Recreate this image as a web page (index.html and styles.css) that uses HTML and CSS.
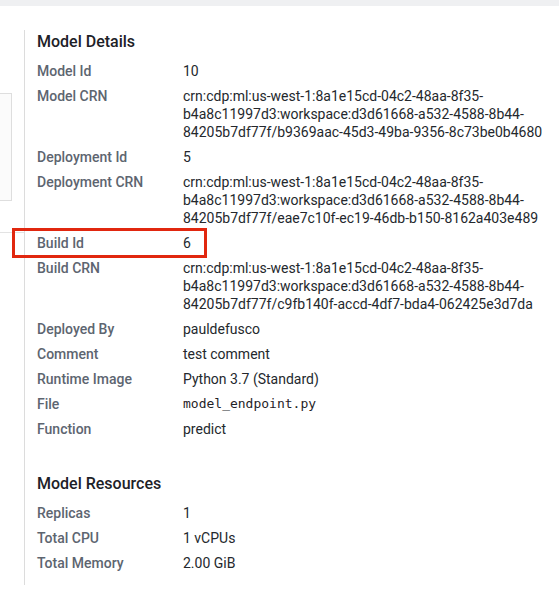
FILE: index.html
```html
<!DOCTYPE html>
<html>
<head>
<meta charset="utf-8">
<link rel="stylesheet" href="styles.css">
</head>
<body>
<div class="topbar"></div>
<div class="layout">
  <aside class="side">
    <div class="side-box"></div>
    <div class="side-rule"></div>
  </aside>
  <section class="panel">
    <h2 class="heading">Model Details</h2>
    <dl class="details">
      <dt>Model Id</dt><dd>10</dd>
      <dt>Model CRN</dt><dd>crn:cdp:ml:us-west-1:8a1e15cd-04c2-48aa-8f35-b4a8c11997d3:workspace:d3d61668-a532-4588-8b44-84205b7df77f/b9369aac-45d3-49ba-9356-8c73be0b4680</dd>
      <dt>Deployment Id</dt><dd>5</dd>
      <dt>Deployment CRN</dt><dd>crn:cdp:ml:us-west-1:8a1e15cd-04c2-48aa-8f35-b4a8c11997d3:workspace:d3d61668-a532-4588-8b44-84205b7df77f/eae7c10f-ec19-46db-b150-8162a403e489</dd>
      <div class="highlight"><dt>Build Id</dt><dd>6</dd></div>
      <dt>Build CRN</dt><dd>crn:cdp:ml:us-west-1:8a1e15cd-04c2-48aa-8f35-b4a8c11997d3:workspace:d3d61668-a532-4588-8b44-84205b7df77f/c9fb140f-accd-4df7-bda4-062425e3d7da</dd>
      <dt>Deployed By</dt><dd>pauldefusco</dd>
      <dt>Comment</dt><dd>test comment</dd>
      <dt>Runtime Image</dt><dd>Python 3.7 (Standard)</dd>
      <dt>File</dt><dd class="mono">model_endpoint.py</dd>
      <dt>Function</dt><dd>predict</dd>
    </dl>
    <h2 class="heading heading-2">Model Resources</h2>
    <dl class="details">
      <dt>Replicas</dt><dd>1</dd>
      <dt>Total CPU</dt><dd>1 vCPUs</dd>
      <dt>Total Memory</dt><dd>2.00 GiB</dd>
    </dl>
  </section>
</div>
</body>
</html>
```

FILE: styles.css
```css
html, body {
  margin: 0;
  padding: 0;
  background: #ffffff;
  font-family: Roboto, "Liberation Sans", sans-serif;
}
.topbar {
  height: 6px;
  background: #eff0f2;
}
.layout {
  display: flex;
  padding-top: 24px;
}
.side {
  width: 24px;
  flex: none;
}
.side-box {
  margin-top: 63px;
  width: 11px;
  height: 106px;
  background: #fbfbfb;
  border: 1px solid #dedede;
  border-left: none;
}
.side-rule {
  margin-top: 31px;
  height: 1px;
  background: #e3e3e3;
}
.panel {
  border-left: 1px solid #dcdcdc;
  padding: 2px 12px 13px 12px;
  width: 511px;
}
.heading {
  margin: 0 0 10px 0;
  font-size: 16px;
  line-height: 20px;
  font-weight: 500;
  color: #1d2127;
}
.heading-2 {
  margin-top: 36px;
}
.details {
  margin: 0;
  display: grid;
  grid-template-columns: 146px 1fr;
  row-gap: 7px;
  font-size: 14px;
  line-height: 18px;
}
.details dt {
  font-weight: 500;
  color: #5d6570;
}
.details dd {
  margin: 0;
  color: #24282d;
}
.details .mono {
  font-family: "DejaVu Sans Mono", monospace;
  font-size: 13px;
  color: #1f2328;
}
.highlight {
  display: contents;
}
.highlight dt {
  position: relative;
}
.highlight dt::before {
  content: "";
  position: absolute;
  left: -25px;
  top: -6px;
  width: 189px;
  height: 24px;
  border: 3px solid #e1270f;
}
```
